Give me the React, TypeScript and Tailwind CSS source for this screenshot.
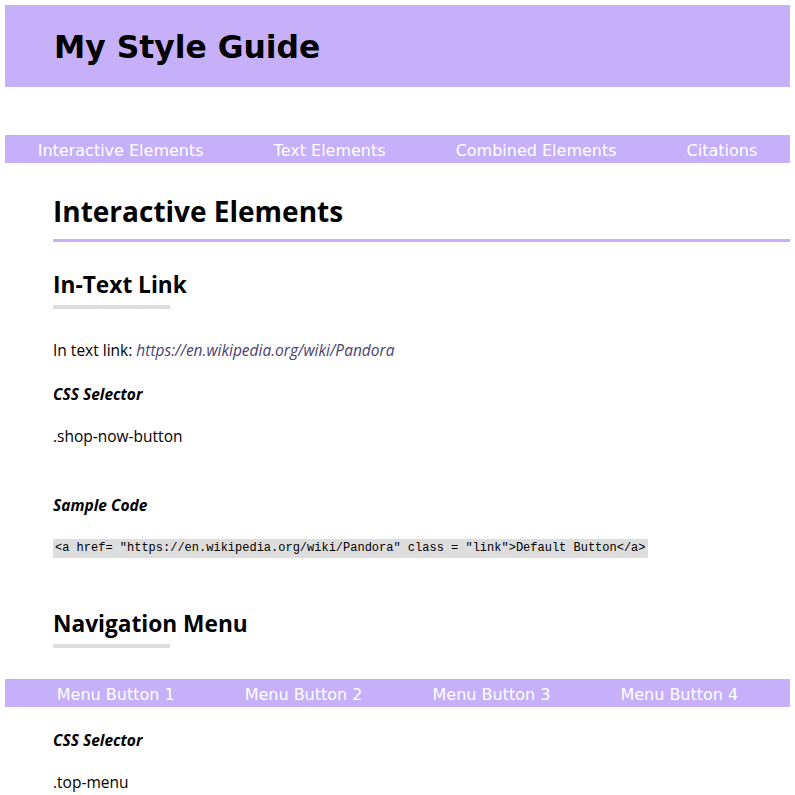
const PURPLE = "bg-[#c5b0f9]";

const topLinks = ["Interactive Elements", "Text Elements", "Combined Elements", "Citations"];
const menuButtons = ["Menu Button 1", "Menu Button 2", "Menu Button 3", "Menu Button 4"];

function NavBar({ items }: { items: string[] }) {
  return (
    <nav className={`${PURPLE} flex h-[28px] items-center justify-center overflow-hidden pt-[3px]`}>
      {items.map((item) => (
        <a
          key={item}
          href="#"
          className="shrink-0 whitespace-nowrap px-[35px] text-[16px] leading-[25px] text-white"
          style={{ fontFamily: '"DejaVu Sans", Verdana, sans-serif' }}
        >
          {item}
        </a>
      ))}
    </nav>
  );
}

function SubHeading({ title, className }: { title: string; className: string }) {
  return (
    <div className={className}>
      <h3 className="pt-[2px] text-[22.7px] font-bold leading-[28px] text-black">{title}</h3>
      <div className="mt-[6px] h-[4px] w-[117px] bg-[#dddddd]" />
    </div>
  );
}

export default function App() {
  return (
    <div
      className="min-h-screen bg-white p-[5px] text-black"
      style={{ fontFamily: '"Open Sans", "Noto Sans", sans-serif' }}
    >
      <header className={`${PURPLE} flex h-[82px] items-center pl-[49px] pt-[4px]`}>
        <h1
          className="text-[31.4px] font-bold leading-none"
          style={{ fontFamily: '"DejaVu Sans", Verdana, sans-serif' }}
        >
          My Style Guide
        </h1>
      </header>

      <div className="mt-[48px]">
        <NavBar items={topLinks} />
      </div>

      <section className="pl-[48px]">
        <h2 className="mt-[31px] border-b-[3px] border-[#c5b0f9] pb-[11px] text-[28px] font-bold leading-[34px]">
          Interactive Elements
        </h2>

        <SubHeading title="In-Text Link" className="mt-[27px]" />

        <p className="mt-[31px] text-[15.5px] leading-[20px]">
          In text link:{" "}
          <a href="#" className="italic text-[#4a4270]">
            https://en.wikipedia.org/wiki/Pandora
          </a>
        </p>

        <h4 className="mt-[24px] text-[15.5px] font-bold italic leading-[20px]">CSS Selector</h4>
        <p className="mt-[22px] text-[15.5px] leading-[20px]">.shop-now-button</p>

        <h4 className="mt-[49px] text-[15.5px] font-bold italic leading-[20px]">Sample Code</h4>
        <code
          className="mt-[24px] block h-[19px] w-fit bg-[#dddddd] px-[2px] text-[12px] leading-[19px]"
          style={{ fontFamily: '"Liberation Mono", "DejaVu Sans Mono", monospace' }}
        >
          {'<a href= "https://en.wikipedia.org/wiki/Pandora" class = "link">Default Button</a>'}
        </code>

        <SubHeading title="Navigation Menu" className="mt-[50px]" />
      </section>

      <div className="mt-[31px]">
        <NavBar items={menuButtons} />
      </div>

      <section className="pl-[48px]">
        <h4 className="mt-[23px] text-[15.5px] font-bold italic leading-[20px]">CSS Selector</h4>
        <p className="mt-[22px] text-[15.5px] leading-[20px]">.top-menu</p>
      </section>
    </div>
  );
}
